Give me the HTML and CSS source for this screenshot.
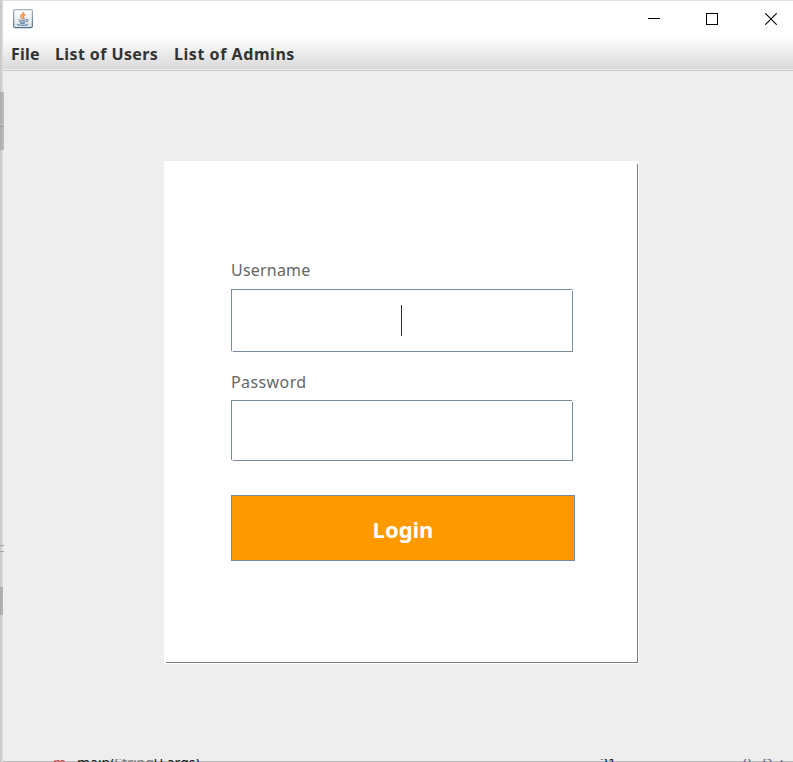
FILE: index.html
```html
<!DOCTYPE html>
<html lang="en">
<head>
<meta charset="utf-8">
<title>Login</title>
<link rel="stylesheet" href="styles.css">
</head>
<body>
<div class="desktop">
  <div class="edge">
    <i class="edge-thumb"></i><i class="edge-tick"></i><i class="edge-grip"></i>
  </div>
  <div class="window">
    <header class="titlebar">
      <svg class="app-icon" width="20" height="20" viewBox="0 0 20 20">
        <defs><linearGradient id="g" x2="0" y2="1"><stop offset="0" stop-color="#fff"/><stop offset="1" stop-color="#dce2e7"/></linearGradient>
        <linearGradient id="b" x2="0" y2="1"><stop offset="0" stop-color="#a6b1ba"/><stop offset="1" stop-color="#527089"/></linearGradient></defs>
        <rect x=".6" y=".6" width="18.8" height="18" rx="1.5" fill="url(#g)" stroke="url(#b)" stroke-width="1.2"/>
        <path d="M10.5 3c1 2-3.200 2.800-2.500 4.700.3 1 1.300 1.500 1.700 2.300M12.300 5.500c-2 .8-2.700 1.800-1.600 3 .4.700.1 1.200-.4 1.700" fill="none" stroke="#ee8b40" stroke-width="1.500"/>
        <path d="M5.500 10.800c2 .7 5.500.7 7.500 0M6.300 12.500c1.800.8 4.500.8 6.200 0M7 14c1.500.6 3.700.6 5 0M13 10.500c2.500-.5 2.400 1.900-.2 2.500M4.500 15c-1 1.300 8.500 2 10.500.2" fill="none" stroke="#6f91ae" stroke-width="1.200"/>
      </svg>
      <div class="controls">
        <svg width="12" height="12" shape-rendering="crispEdges"><path d="M0 5.500h12" stroke="#000"/></svg>
        <svg width="12" height="12" shape-rendering="crispEdges"><rect x=".5" y=".5" width="11" height="11" fill="none" stroke="#000"/></svg>
        <svg class="close" width="12" height="12"><path d="M.3.300l11.400 11.400M11.700.300L.3 11.700" stroke="#000" stroke-width="1.100"/></svg>
      </div>
    </header>
    <nav class="menubar"><span class="m-file">File</span><span class="m-users">List of Users</span><span class="m-admins">List of Admins</span></nav>
    <main class="content">
      <form class="panel">
        <label for="user">Username</label>
        <div class="field user" id="user"><i class="caret"></i></div>
        <label class="l-pass" for="pass">Password</label>
        <div class="field pass" id="pass"></div>
        <button type="button" class="login">Login</button>
      </form>
    </main>
    <footer class="behind">
      <span class="line-mark">m</span><span class="code">main(<span class="type">String</span>[] args)</span>
      <span class="tab">21</span><span class="tail">()&nbsp;&nbsp;&nbsp;D&nbsp;&nbsp;i</span>
    </footer>
  </div>
</div>
</body>
</html>
```

FILE: styles.css
```css
* { box-sizing: border-box; }
body { margin: 0; width: 793px; height: 762px; overflow: hidden; background: #ededed; font-family: "Noto Sans", sans-serif; }
.desktop { display: flex; height: 762px; }
.edge { position: relative; flex: 0 0 3px; background: linear-gradient(90deg, #c5c5c5, #d2d2d2 50%, #dedede); }
.edge i { position: absolute; left: 0; }
.edge-thumb { top: 92px; width: 4px; height: 58px; background: linear-gradient(#9a9a9a, #9a9a9a) 0 34px / 4px 1px no-repeat, linear-gradient(90deg, #aeaeae, #bcbcbc); z-index: 1; }
.edge-tick { top: 545px; width: 4px; height: 7px; border: solid #a6a6a6; border-width: 1px 0; z-index: 1; }
.edge-grip { top: 587px; width: 3px; height: 28px; background: linear-gradient(90deg, #aaa, #b4b4b4); }
.window { flex: 1; display: flex; flex-direction: column; min-width: 0; }
.titlebar { height: 37px; background: #fff; border-top: 1px solid #e2e2e2; display: flex; justify-content: space-between; padding: 8px 16px 0 10px; }
.controls { display: flex; gap: 46px; padding-top: 4px; }
.controls svg { display: block; }
.controls .close { margin-left: 1px; }
.menubar { height: 34px; background: linear-gradient(#fff, #dadada 31px, #dadada 32px, #eee 32px, #eee 33px, #c9c9c9 33px); display: flex; padding-left: 8px; color: #333; font-weight: 700; font-size: 16px; line-height: 34px; white-space: nowrap; }
.m-file { width: 44px; letter-spacing: .2px; }
.m-users { width: 119px; letter-spacing: .4px; }
.m-admins { letter-spacing: .55px; }
.content { flex: 1; background: #eee; padding: 90px 0 0 161px; }
.panel { position: relative; width: 475px; height: 503px; background: #fff; padding: 98px 64px 0 67px; }
.panel::after { content: ""; position: absolute; left: 2px; top: 3px; right: 1px; bottom: 1px; border: solid #7c7c7c; border-width: 0 1px 1px 0; pointer-events: none; }
label { display: block; height: 30px; line-height: 23px; font-size: 16px; letter-spacing: .2px; color: #666; }
.l-pass { height: 29px; letter-spacing: .4px; }
.field { position: relative; width: 342px; border: 1px solid #7a8a99; display: flex; align-items: center; justify-content: center; }
.field::before { content: ""; position: absolute; left: -1px; bottom: -1px; width: 2px; height: 1px; background: #eee; }
.field::after { content: ""; position: absolute; right: -3px; top: -1px; width: 3px; height: 1px; background: #eee; box-shadow: -1px 1px #fff; }
.user { height: 63px; margin-bottom: 19px; }
.pass { height: 61px; margin-bottom: 34px; }
.caret { width: 1px; height: 31px; margin-right: 2px; background: #333; }
.login { display: block; width: 344px; height: 66px; padding: 2px 0 0; background: #f90; border: 1px solid #7a8a99; color: #fff; font: 700 22px/30px "Noto Sans", sans-serif; letter-spacing: 0; }
.behind { height: 3px; margin-top: -1px; overflow: hidden; background: linear-gradient(#eee 2px, #bbb 2px); display: flex; font-size: 14px; line-height: 16px; white-space: nowrap; color: #111; }
.behind > span { margin-top: -4px; }
.line-mark { width: 24px; margin-left: 50px; color: #c44; }
.code { width: 523px; }
.type { color: #777; }
.tab { width: 143px; }
.tail { color: #668; }
```
